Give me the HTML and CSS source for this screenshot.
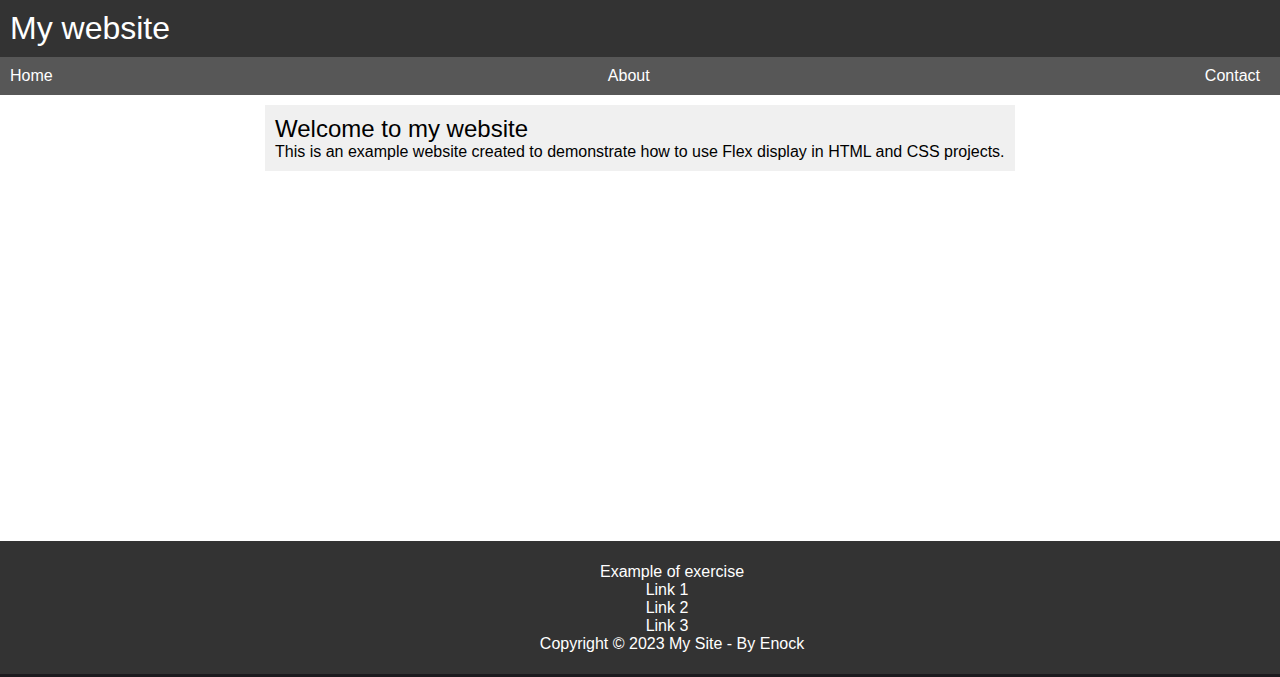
FILE: index.html
```html
<!DOCTYPE html>
<html lang="en">
<head>
<meta charset="utf-8">
<title>My website</title>
<link rel="stylesheet" href="styles.css">
</head>
<body>
<header class="site-header">
  <h1 class="site-title">My website</h1>
</header>
<nav class="site-nav">
  <a class="nav-link" href="#">Home</a>
  <a class="nav-link" href="#">About</a>
  <a class="nav-link" href="#">Contact</a>
</nav>
<main class="site-main">
  <section class="welcome">
    <h2 class="welcome-title">Welcome to my website</h2>
    <p class="welcome-text">This is an example website created to demonstrate how to use Flex display in HTML and CSS projects.</p>
  </section>
</main>
<footer class="site-footer">
  <p class="footer-line">Example of exercise</p>
  <a class="footer-line footer-link" href="#">Link 1</a>
  <a class="footer-line footer-link" href="#">Link 2</a>
  <a class="footer-line footer-link" href="#">Link 3</a>
  <p class="footer-line">Copyright © 2023 My Site - By Enock</p>
</footer>
<div class="bottom-strip"></div>
</body>
</html>
```
FILE: styles.css
```css
html, body {
  margin: 0;
  padding: 0;
}
body {
  font-family: "Liberation Sans", Arial, sans-serif;
  font-size: 16px;
  line-height: normal;
  min-height: 100vh;
  display: flex;
  flex-direction: column;
  background: #ffffff;
}
.site-header {
  background: #333333;
  padding: 10px;
}
.site-title {
  margin: 0;
  color: #ffffff;
  font-size: 32px;
  font-weight: normal;
  line-height: 37px;
}
.site-nav {
  background: #575757;
  display: flex;
  justify-content: space-between;
  padding: 10px 20px 10px 10px;
}
.nav-link {
  color: #ffffff;
  text-decoration: none;
  line-height: 18px;
}
.site-main {
  flex: 1;
  display: flex;
  justify-content: center;
  align-items: flex-start;
  padding-top: 10px;
}
.welcome {
  width: 730px;
  background: #f0f0f0;
  padding: 10px;
}
.welcome-title {
  margin: 0;
  font-size: 24px;
  font-weight: normal;
  line-height: 28px;
  color: #000;
}
.welcome-text {
  margin: 0;
  line-height: 18px;
  color: #000;
}
.site-footer {
  background: #333333;
  color: #ffffff;
  display: flex;
  flex-direction: column;
  align-items: center;
  padding: 22px 0 21px 64px;
}
.footer-line {
  margin: 0;
  color: #ffffff;
  text-decoration: none;
  line-height: 18px;
}
.footer-link {
  margin-right: 10px;
}
.bottom-strip {
  height: 3px;
  background: #1c1a1e;
}
```
